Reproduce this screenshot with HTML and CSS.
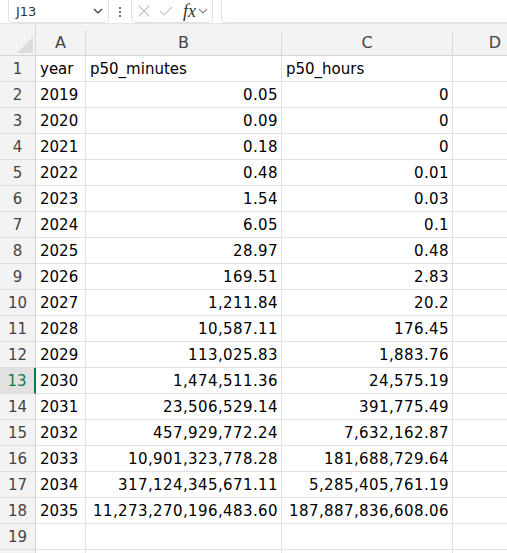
FILE: index.html
```html
<!DOCTYPE html>
<html>
<head>
<meta charset="utf-8">
<link rel="stylesheet" href="styles.css">
</head>
<body>
<div class="toolbar">
  <div class="namebox">
    <span class="name">J13</span>
    <svg class="chev" width="10" height="6" viewBox="0 0 10 6"><polyline points="1,1 5,5 9,1" fill="none" stroke="#333" stroke-width="1.2"/></svg>
  </div>
  <div class="dots"><span></span><span></span><span></span></div>
  <div class="fbtns">
    <svg width="14" height="12" viewBox="0 0 14 12"><path d="M1.5 0.5 L12.5 11.5 M12.5 0.5 L1.5 11.5" stroke="#c4c4c4" stroke-width="1.1" fill="none"/></svg>
    <svg width="14" height="10" viewBox="0 0 14 10"><polyline points="1,5 5,9 13,1" fill="none" stroke="#c4c4c4" stroke-width="1.1"/></svg>
    <span class="fx">fx</span>
    <svg width="10" height="6" viewBox="0 0 10 6"><polyline points="1,1 5,5 9,1" fill="none" stroke="#888" stroke-width="1.1"/></svg>
  </div>
  <div class="formula"></div>
</div>
<div class="sheet">
  <div class="row head">
    <div class="hc corner"><svg width="16" height="16" viewBox="0 0 16 16"><polygon points="0,16 16,16 16,0" fill="#dcdcdc"/></svg></div>
    <div class="hc"><div class="hl">A</div></div>
    <div class="hc"><div class="hl">B</div></div>
    <div class="hc"><div class="hl">C</div></div>
    <div class="hc"><div class="hl d">D</div></div>
  </div>
  <div class="row"><div class="rh">1</div><div class="c">year</div><div class="c">p50_minutes</div><div class="c">p50_hours</div><div class="c"></div></div>
  <div class="row"><div class="rh">2</div><div class="c">2019</div><div class="c n">0.05</div><div class="c n">0</div><div class="c"></div></div>
  <div class="row"><div class="rh">3</div><div class="c">2020</div><div class="c n">0.09</div><div class="c n">0</div><div class="c"></div></div>
  <div class="row"><div class="rh">4</div><div class="c">2021</div><div class="c n">0.18</div><div class="c n">0</div><div class="c"></div></div>
  <div class="row"><div class="rh">5</div><div class="c">2022</div><div class="c n">0.48</div><div class="c n">0.01</div><div class="c"></div></div>
  <div class="row"><div class="rh">6</div><div class="c">2023</div><div class="c n">1.54</div><div class="c n">0.03</div><div class="c"></div></div>
  <div class="row"><div class="rh">7</div><div class="c">2024</div><div class="c n">6.05</div><div class="c n">0.1</div><div class="c"></div></div>
  <div class="row"><div class="rh">8</div><div class="c">2025</div><div class="c n">28.97</div><div class="c n">0.48</div><div class="c"></div></div>
  <div class="row"><div class="rh">9</div><div class="c">2026</div><div class="c n">169.51</div><div class="c n">2.83</div><div class="c"></div></div>
  <div class="row"><div class="rh">10</div><div class="c">2027</div><div class="c n">1,211.84</div><div class="c n">20.2</div><div class="c"></div></div>
  <div class="row"><div class="rh">11</div><div class="c">2028</div><div class="c n">10,587.11</div><div class="c n">176.45</div><div class="c"></div></div>
  <div class="row"><div class="rh">12</div><div class="c">2029</div><div class="c n">113,025.83</div><div class="c n">1,883.76</div><div class="c"></div></div>
  <div class="row"><div class="rh sel">13</div><div class="c">2030</div><div class="c n">1,474,511.36</div><div class="c n">24,575.19</div><div class="c"></div></div>
  <div class="row"><div class="rh">14</div><div class="c">2031</div><div class="c n">23,506,529.14</div><div class="c n">391,775.49</div><div class="c"></div></div>
  <div class="row"><div class="rh">15</div><div class="c">2032</div><div class="c n">457,929,772.24</div><div class="c n">7,632,162.87</div><div class="c"></div></div>
  <div class="row"><div class="rh">16</div><div class="c">2033</div><div class="c n">10,901,323,778.28</div><div class="c n">181,688,729.64</div><div class="c"></div></div>
  <div class="row"><div class="rh">17</div><div class="c">2034</div><div class="c n">317,124,345,671.11</div><div class="c n">5,285,405,761.19</div><div class="c"></div></div>
  <div class="row"><div class="rh">18</div><div class="c">2035</div><div class="c n">11,273,270,196,483.60</div><div class="c n">187,887,836,608.06</div><div class="c"></div></div>
  <div class="row"><div class="rh">19</div><div class="c"></div><div class="c"></div><div class="c"></div><div class="c"></div></div>
  <div class="row"><div class="rh"></div><div class="c"></div><div class="c"></div><div class="c"></div><div class="c"></div></div>
</div>
</body>
</html>
```
FILE: styles.css
```css
html, body {
  margin: 0;
  padding: 0;
  background: #fff;
  overflow: hidden;
  width: 507px;
  height: 553px;
}
body {
  font-family: "DejaVu Sans", sans-serif;
  color: #000;
}
.toolbar {
  height: 23px;
  display: flex;
  align-items: stretch;
  padding-left: 8px;
  box-sizing: border-box;
  white-space: nowrap;
}
.namebox {
  width: 101px;
  box-sizing: border-box;
  border: 1px solid #e1e1e1;
  border-top: none;
  border-radius: 0 0 5px 5px;
  display: flex;
  align-items: center;
  justify-content: space-between;
  padding: 0 5px 0 7px;
}
.name {
  font-size: 13px;
  color: #333;
}
.dots {
  width: 22px;
  display: flex;
  flex-direction: column;
  align-items: center;
  justify-content: center;
  gap: 2px;
}
.dots span {
  width: 2px;
  height: 2px;
  background: #444;
  border-radius: 1px;
}
.fbtns {
  width: 82px;
  box-sizing: border-box;
  border: 1px solid #e1e1e1;
  border-top: none;
  border-radius: 0 0 5px 5px;
  display: flex;
  align-items: center;
  padding: 0 3px 0 5px;
}
.fbtns svg:nth-child(1) { margin-right: 8px; }
.fbtns svg:nth-child(2) { margin-right: 10px; }
.fx {
  font-family: "Liberation Serif", serif;
  font-style: italic;
  font-size: 18px;
  color: #333;
  margin-right: 2px;
  line-height: 1;
}
.formula {
  margin-left: 8px;
  flex: 1;
  border: 1px solid #e1e1e1;
  border-top: none;
  border-right: none;
  border-radius: 0 0 0 5px;
}
.sheet {
  width: 507px;
}
.row {
  display: grid;
  grid-template-columns: 36px 50px 196px 171px 54px;
  height: 26px;
}
.row.head {
  height: 33px;
  background: #f3f3f3;
  border-top: 1px solid #e4e4e4;
  box-sizing: border-box;
}
.hc {
  border-bottom: 1px solid #d4d4d4;
  padding-top: 7px;
}
.hl {
  height: 24px;
  border-right: 1px solid #d8d8d8;
  text-align: center;
  font-size: 16px;
  line-height: 24px;
  color: #444;
}
.hl.d {
  border-right: none;
  padding-left: 30px;
}
.corner {
  display: flex;
  align-items: flex-end;
  justify-content: flex-end;
  padding: 0 2px 2px 0;
  border-right: 1px solid #d8d8d8;
  box-sizing: border-box;
}
.rh {
  background: #f3f3f3;
  border-right: 1px solid #d4d4d4;
  border-bottom: 1px solid #dcdcdc;
  box-sizing: border-box;
  text-align: center;
  font-size: 15px;
  line-height: 23px;
  padding-top: 2px;
  color: #444;
}
.rh.sel {
  background: #e1e1e1;
  color: #107c41;
  border-right: 2px solid #107c41;
}
.c {
  border-right: 1px solid #e1e1e1;
  border-bottom: 1px solid #e1e1e1;
  box-sizing: border-box;
  font-size: 15px;
  line-height: 23px;
  padding: 2px 0 0 4px;
  white-space: nowrap;
}
.c:last-child {
  border-right: none;
}
.c.n {
  text-align: right;
  padding: 2px 3px 0 0;
  letter-spacing: 0.4px;
}
```
